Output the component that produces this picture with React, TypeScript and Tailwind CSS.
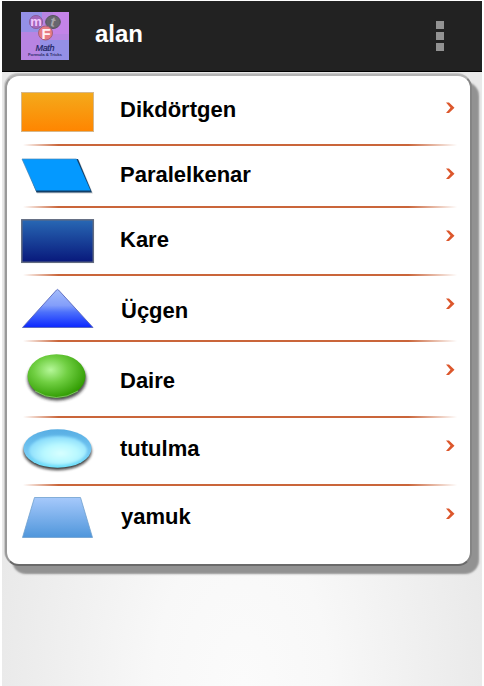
import type { ReactNode } from "react";

type Row = {
  label: string;
  height: string;
  labelPos: string;
  arrowPos: string;
  viewBox: string;
  icon: ReactNode;
};

const rows: Row[] = [
  {
    label: "Dikdörtgen",
    height: "h-[70px]",
    labelPos: "mt-[21px] ml-[22px]",
    arrowPos: "mt-[26px]",
    viewBox: "18 76 80 70",
    icon: <rect x="21.5" y="92.5" width="72" height="39" fill="url(#orange)" stroke="#d6b78a" />,
  },
  {
    label: "Paralelkenar",
    height: "h-[62px]",
    labelPos: "mt-[16px] ml-[22px]",
    arrowPos: "mt-[22px]",
    viewBox: "18 146 80 62",
    icon: (
      <>
        <path d="M24 160H79L93 193.5H37Z" fill="#8a8a8a" opacity=".35" />
        <path d="M23 159H78L92 192.5H36.5Z" fill="#123f68" />
        <path d="M22 159H76.5L90.5 190.5H36Z" fill="#0499ff" />
        <path d="M36 190.5L22 159H76.5" fill="none" stroke="#4c87b5" strokeWidth=".7" />
      </>
    ),
  },
  {
    label: "Kare",
    height: "h-[68px]",
    labelPos: "mt-[19px] ml-[22px]",
    arrowPos: "mt-[22px]",
    viewBox: "18 208 80 68",
    icon: <rect x="21.8" y="219.8" width="71.5" height="42.5" fill="url(#navy)" stroke="#626b80" strokeWidth="1.5" />,
  },
  {
    label: "Üçgen",
    height: "h-[66px]",
    labelPos: "mt-[22px] ml-[23px]",
    arrowPos: "mt-[22px]",
    viewBox: "18 276 80 66",
    icon: (
      <path d="M22.5 327.5L56.5 290Q57.5 288.8 58.5 290L93 327.5Z" fill="url(#triangle)" stroke="#5868bd" strokeWidth=".9" />
    ),
  },
  {
    label: "Daire",
    height: "h-[76px]",
    labelPos: "mt-[26px] ml-[22px]",
    arrowPos: "mt-[22px]",
    viewBox: "18 342 80 76",
    icon: (
      <>
        <ellipse cx="57" cy="379" rx="29.5" ry="21.5" fill="#222" opacity=".8" filter="url(#soft)" />
        <ellipse cx="56.5" cy="376" rx="29" ry="21.8" fill="url(#green)" />
        <path d="M35 391Q56 404 78 391" fill="none" stroke="#8fc777" strokeWidth=".8" />
      </>
    ),
  },
  {
    label: "tutulma",
    height: "h-[68px]",
    labelPos: "mt-[18px] ml-[22px]",
    arrowPos: "mt-[22px]",
    viewBox: "18 418 80 68",
    icon: (
      <>
        <ellipse cx="57.5" cy="451" rx="34" ry="19" fill="#111" opacity=".85" filter="url(#soft)" />
        <ellipse cx="57.5" cy="448.5" rx="34" ry="19.3" fill="url(#aqua)" />
        <ellipse cx="58" cy="450.5" rx="29" ry="14.5" fill="url(#aquaGlow)" filter="url(#glow)" />
      </>
    ),
  },
  {
    label: "yamuk",
    height: "h-[77px]",
    labelPos: "mt-[18px] ml-[23px]",
    arrowPos: "mt-[22px]",
    viewBox: "18 486 80 77",
    icon: <path d="M34.5 497.5H80.5L92.5 537.5H22.5Z" fill="url(#steel)" stroke="#6e9fce" strokeWidth=".8" />,
  },
];

function Gradients() {
  return (
    <svg className="h-0 w-0 shrink-0" aria-hidden="true">
      <defs>
        <linearGradient id="orange" x2="0" y2="1">
          <stop stopColor="#f4aa1b" />
          <stop offset="1" stopColor="#ff8500" />
        </linearGradient>
        <linearGradient id="navy" x2="0" y2="1">
          <stop stopColor="#2868b4" />
          <stop offset="1" stopColor="#08187b" />
        </linearGradient>
        <linearGradient id="triangle" x2="0" y2="1">
          <stop stopColor="#a4bcfa" />
          <stop offset=".42" stopColor="#839efa" />
          <stop offset=".6" stopColor="#4c70fb" />
          <stop offset="1" stopColor="#0b27ff" />
        </linearGradient>
        <radialGradient id="green" cx=".4" cy=".36" r=".65">
          <stop stopColor="#b5f799" />
          <stop offset=".45" stopColor="#70cf42" />
          <stop offset="1" stopColor="#319c02" />
        </radialGradient>
        <linearGradient id="aqua" x2="0" y2="1">
          <stop stopColor="#57ade3" />
          <stop offset=".6" stopColor="#74c8f3" />
          <stop offset="1" stopColor="#6fe3fb" />
        </linearGradient>
        <radialGradient id="aquaGlow" cx=".55" cy=".6" r=".6">
          <stop stopColor="#d8ffff" />
          <stop offset=".5" stopColor="#b8f8ff" />
          <stop offset="1" stopColor="#86d9fb" />
        </radialGradient>
        <linearGradient id="steel" x2="0" y2="1">
          <stop stopColor="#a6c9fb" />
          <stop offset="1" stopColor="#4f96db" />
        </linearGradient>
        <filter id="soft" x="-20%" y="-30%" width="140%" height="160%">
          <feGaussianBlur stdDeviation="1.6" />
        </filter>
        <filter id="glow" x="-20%" y="-30%" width="140%" height="160%">
          <feGaussianBlur stdDeviation="1" />
        </filter>
      </defs>
    </svg>
  );
}

function Logo() {
  return (
    <svg className="ml-[19px] h-12 w-12" viewBox="0 0 48 48" fontFamily="Liberation Sans, sans-serif" textAnchor="middle">
      <path d="M0 0H48V48H0Z" fill="#b884e2" />
      <path d="M0 0H21V20H0ZM19 28H48V48H19Z" fill="#9490e6" />
      <path d="M32 0H48V22H32Z" fill="#c483e8" />
      <circle cx="15" cy="10" r="6.6" fill="#a366bc" stroke="#8a609f" />
      <ellipse cx="32" cy="10" rx="7.3" ry="6.5" fill="#68666f" stroke="#55545c" />
      <circle cx="24.5" cy="21" r="7" fill="#e67b83" stroke="#a5607c" />
      <text x="15" y="14" fontSize="13" fontWeight="bold" fill="#f2c9ff">m</text>
      <text x="32" y="14.5" fontSize="14" fontWeight="bold" fill="#a9a5ad" transform="rotate(15 32 10)">t</text>
      <text x="25" y="27" fontSize="15" fontWeight="bold" fill="#fff0f4">F</text>
      <text x="24" y="38.5" fontSize="9" fontStyle="italic" fontWeight="normal" fill="#202665" stroke="#202665" strokeWidth=".2" textLength="19">Math</text>
      <text x="24" y="43.5" fontSize="4.4" fontWeight="bold" fill="#30306d" textLength="34">Formula & Tricks</text>
    </svg>
  );
}

export default function App() {
  return (
    <div className="h-[686px] w-[484px] overflow-hidden bg-white px-[2px] pt-px font-['Liberation_Sans',Arial,sans-serif] font-bold">
      <div className="flex h-[685px] flex-col bg-[radial-gradient(ellipse_250px_430px_at_50%_100%,#fbfbfb_0%,#f8f8f8_35%,#e9e9e9_100%)]">
        <header className="flex h-[71px] shrink-0 items-center border-b border-black bg-[#222]">
          <Logo />
          <h1 className="-mt-1 ml-[26px] text-2xl leading-7 text-white">alan</h1>
          <div className="mr-[38px] ml-auto flex flex-col gap-[3px]" aria-label="Menu">
            <span className="size-2 bg-[#929292]" />
            <span className="size-2 bg-[#929292]" />
            <span className="size-2 bg-[#929292]" />
          </div>
        </header>
        <main className="mt-[2px] ml-[3px] h-[492px] w-[467px] shrink-0 rounded-[14px] border-2 border-t-[#b4b4b4] border-r-[#858585] border-b-[#6a6a6a] border-l-[#999] bg-white shadow-[7px_8px_2px_#929292,-1px_-1px_1px_#c2c2c2]">
          <Gradients />
          <ul>
            {rows.map((row, index) => (
              <li key={row.label} className={`${row.height} flex flex-col`}>
                <div className="flex min-h-0 flex-1 items-start">
                  <svg className={`ml-[11px] w-20 shrink-0 ${row.height}`} viewBox={row.viewBox}>
                    {row.icon}
                  </svg>
                  <span className={`text-[22px] leading-[25px] text-black ${row.labelPos}`}>{row.label}</span>
                  <svg className={`mr-[15px] ml-auto h-3 w-[10px] ${row.arrowPos}`} viewBox="0 0 10 12">
                    <path d="M1 .5H4L9.5 5.7L4 11H1L5.5 5.7Z" fill="#dc572c" />
                  </svg>
                </div>
                {index < rows.length - 1 && (
                  <div className="mr-[4px] ml-[16px] h-[2px] shrink-0 bg-[linear-gradient(90deg,transparent,#ca653a_8%,#ca653a_87%,transparent_98%)]" />
                )}
              </li>
            ))}
          </ul>
        </main>
      </div>
    </div>
  );
}
